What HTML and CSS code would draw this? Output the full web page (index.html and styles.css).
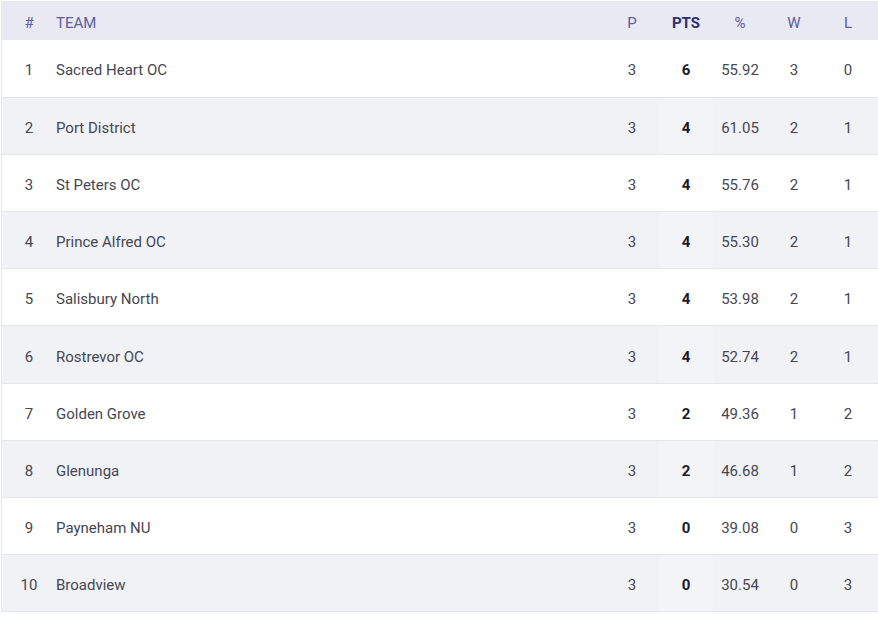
FILE: index.html
```html
<!DOCTYPE html>
<html lang="en">
<head>
  <meta charset="UTF-8">
  <meta name="viewport" content="width=device-width, initial-scale=1.0">
  <title>Ladder</title>
  <link rel="stylesheet" href="styles.css">
</head>
<body>
  <div class="ladder">
    <table class="ladder-table">
      <thead>
        <tr>
          <th class="col-rank">#</th>
          <th class="col-team">Team</th>
          <th class="col-num">P</th>
          <th class="col-num col-pts">PTS</th>
          <th class="col-num">%</th>
          <th class="col-num">W</th>
          <th class="col-num">L</th>
        </tr>
      </thead>
      <tbody>
        <tr>
          <td class="col-rank">1</td>
          <td class="col-team">Sacred Heart OC</td>
          <td class="col-num">3</td>
          <td class="col-num col-pts">6</td>
          <td class="col-num">55.92</td>
          <td class="col-num">3</td>
          <td class="col-num">0</td>
        </tr>
        <tr>
          <td class="col-rank">2</td>
          <td class="col-team">Port District</td>
          <td class="col-num">3</td>
          <td class="col-num col-pts">4</td>
          <td class="col-num">61.05</td>
          <td class="col-num">2</td>
          <td class="col-num">1</td>
        </tr>
        <tr>
          <td class="col-rank">3</td>
          <td class="col-team">St Peters OC</td>
          <td class="col-num">3</td>
          <td class="col-num col-pts">4</td>
          <td class="col-num">55.76</td>
          <td class="col-num">2</td>
          <td class="col-num">1</td>
        </tr>
        <tr>
          <td class="col-rank">4</td>
          <td class="col-team">Prince Alfred OC</td>
          <td class="col-num">3</td>
          <td class="col-num col-pts">4</td>
          <td class="col-num">55.30</td>
          <td class="col-num">2</td>
          <td class="col-num">1</td>
        </tr>
        <tr>
          <td class="col-rank">5</td>
          <td class="col-team">Salisbury North</td>
          <td class="col-num">3</td>
          <td class="col-num col-pts">4</td>
          <td class="col-num">53.98</td>
          <td class="col-num">2</td>
          <td class="col-num">1</td>
        </tr>
        <tr>
          <td class="col-rank">6</td>
          <td class="col-team">Rostrevor OC</td>
          <td class="col-num">3</td>
          <td class="col-num col-pts">4</td>
          <td class="col-num">52.74</td>
          <td class="col-num">2</td>
          <td class="col-num">1</td>
        </tr>
        <tr>
          <td class="col-rank">7</td>
          <td class="col-team">Golden Grove</td>
          <td class="col-num">3</td>
          <td class="col-num col-pts">2</td>
          <td class="col-num">49.36</td>
          <td class="col-num">1</td>
          <td class="col-num">2</td>
        </tr>
        <tr>
          <td class="col-rank">8</td>
          <td class="col-team">Glenunga</td>
          <td class="col-num">3</td>
          <td class="col-num col-pts">2</td>
          <td class="col-num">46.68</td>
          <td class="col-num">1</td>
          <td class="col-num">2</td>
        </tr>
        <tr>
          <td class="col-rank">9</td>
          <td class="col-team">Payneham NU</td>
          <td class="col-num">3</td>
          <td class="col-num col-pts">0</td>
          <td class="col-num">39.08</td>
          <td class="col-num">0</td>
          <td class="col-num">3</td>
        </tr>
        <tr>
          <td class="col-rank">10</td>
          <td class="col-team">Broadview</td>
          <td class="col-num">3</td>
          <td class="col-num col-pts">0</td>
          <td class="col-num">30.54</td>
          <td class="col-num">0</td>
          <td class="col-num">3</td>
        </tr>
      </tbody>
    </table>
  </div>
</body>
</html>
```

FILE: styles.css
```css
/* Base */
* {
  margin: 0;
  padding: 0;
  box-sizing: border-box;
}

body {
  background: #fff;
  font-family: Roboto, "Liberation Sans", sans-serif;
  color: #464751;
  padding: 1px 0 0 1px;
}

/* Ladder table */
.ladder {
  border-left: 1px solid #e6e8ee;
  border-top: 1px solid #e6e8ee;
}

.ladder-table {
  width: 100%;
  border-collapse: collapse;
  table-layout: fixed;
  font-size: 15px;
}

.ladder-table th {
  height: 38px;
  padding-top: 3px;
  background: #e8e9f3;
  color: #5c609c;
  font-weight: 400;
  text-transform: uppercase;
}

.ladder-table td {
  height: 57.2px;
  padding-top: 4px;
  border-bottom: 1px solid #e2e5eb;
}

.ladder-table tbody tr:nth-child(even) td {
  background: #f0f2f6;
}

.ladder-table tbody tr:nth-child(even) td.col-pts {
  background: #f3f4f8;
}

/* Columns */
.col-rank {
  width: 54px;
  text-align: center;
}

.col-team {
  text-align: left;
}

.col-num {
  width: 54px;
  text-align: center;
}

.ladder-table th:last-child,
.ladder-table td:last-child {
  width: 57px;
  padding-right: 3px;
}

th.col-pts {
  font-weight: 700;
  color: #2b2e70;
}

td.col-pts {
  font-weight: 700;
  color: #1b1b2d;
}
```
